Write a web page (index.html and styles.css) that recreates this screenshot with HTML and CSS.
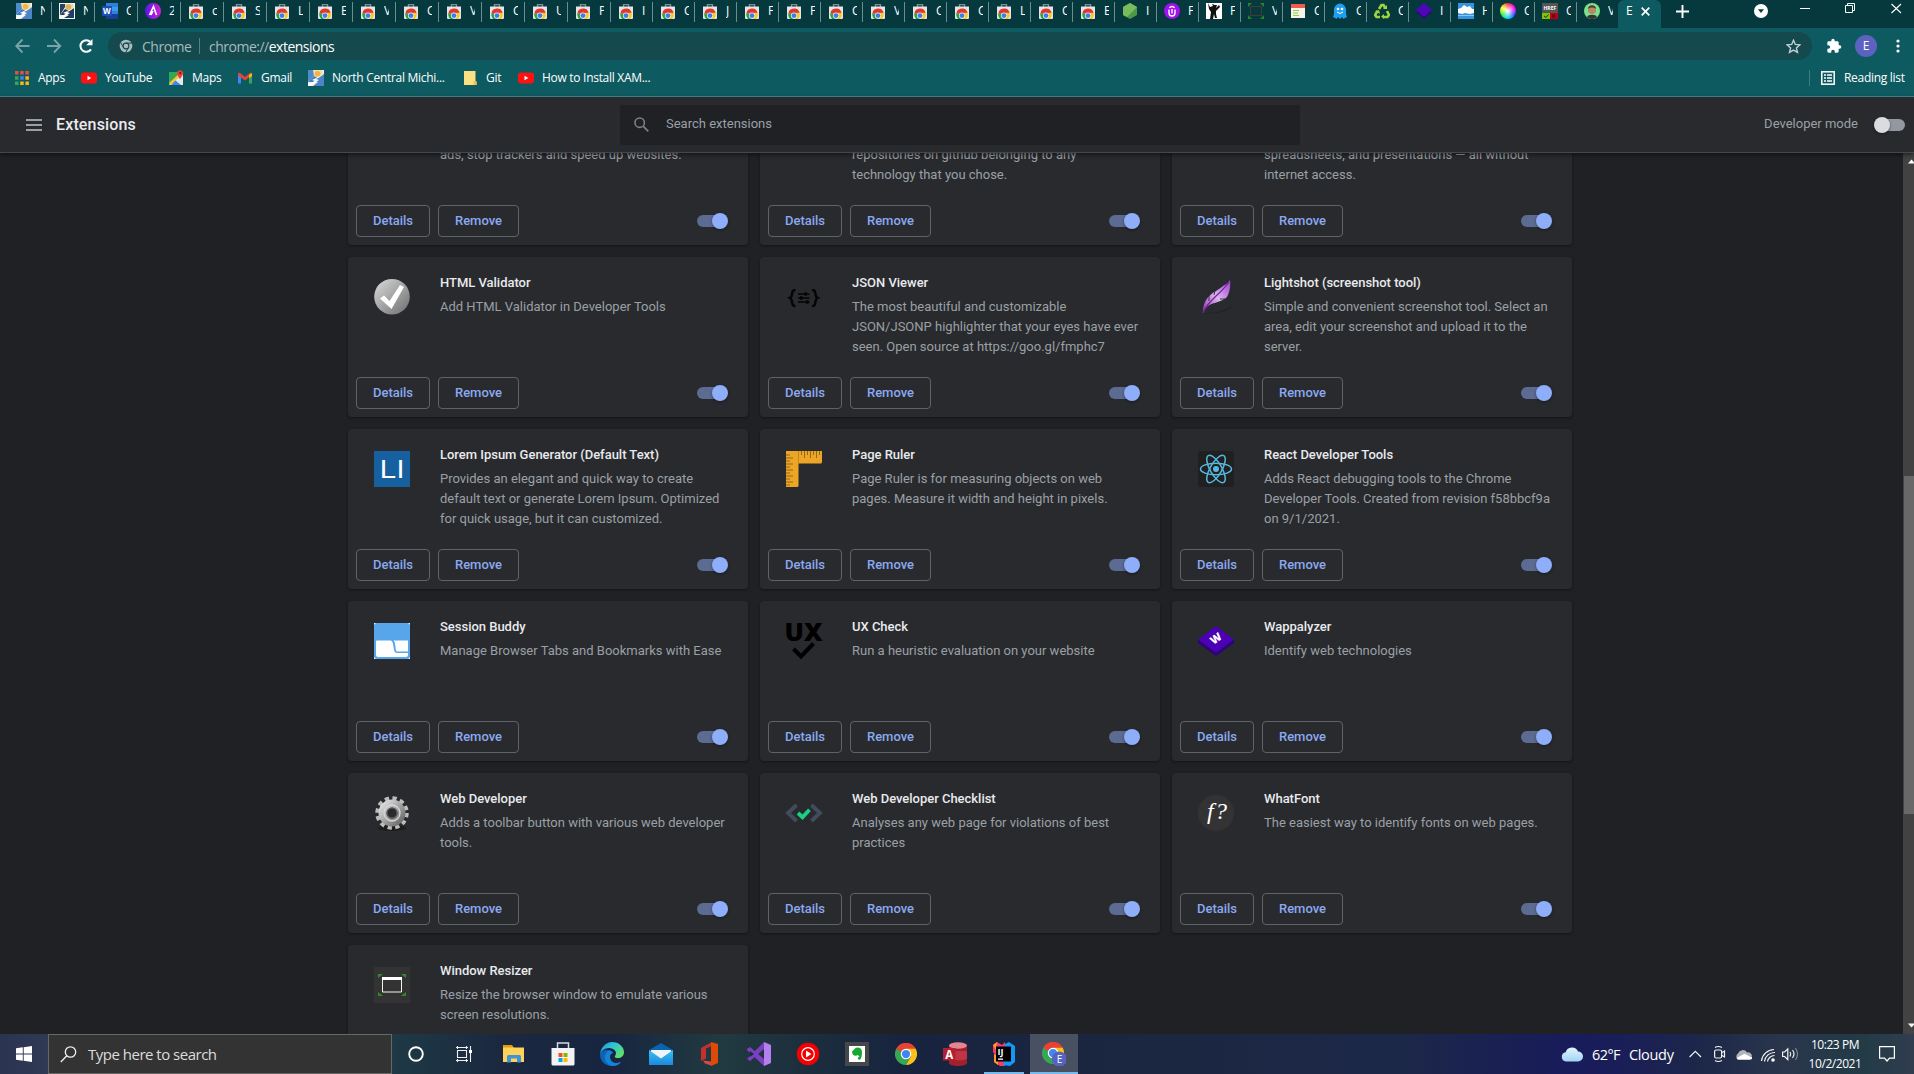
FILE: index.html
```html
<!DOCTYPE html>
<html lang="en">
<head>
<meta charset="utf-8">
<title>Extensions</title>
<link rel="stylesheet" href="styles.css">
</head>
<body>
<svg class="defs" width="0" height="0" aria-hidden="true">
  <defs>
    <linearGradient id="gSilver" x1="0" y1="0" x2="1" y2="1"><stop offset="0" stop-color="#dcdcdc"/><stop offset="1" stop-color="#6c6c6c"/></linearGradient>
    <linearGradient id="gFeather" x1="0" y1="1" x2="1" y2="0"><stop offset="0" stop-color="#8d2fb5"/><stop offset=".5" stop-color="#dcb4ee"/><stop offset="1" stop-color="#9b3fd0"/></linearGradient>
    <linearGradient id="gEdge" x1="0" y1="0" x2="1" y2=".6"><stop offset="0" stop-color="#1a8fe0"/><stop offset=".5" stop-color="#2fc3d8"/><stop offset="1" stop-color="#5fe06a"/></linearGradient>
    <linearGradient id="gPurple" x1="0" y1="0" x2="1" y2="0"><stop offset="0" stop-color="#5a15e8"/><stop offset="1" stop-color="#d41fd8"/></linearGradient>
    <linearGradient id="gCloud" x1="0" y1="0" x2="0" y2="1"><stop offset="0" stop-color="#e4f5ff"/><stop offset="1" stop-color="#9fd4f5"/></linearGradient>
    <linearGradient id="gMail" x1="0" y1="0" x2="0" y2="1"><stop offset="0" stop-color="#35c3f3"/><stop offset="1" stop-color="#1e88dd"/></linearGradient>
  </defs>
  <symbol id="store" viewBox="0 0 16 16">
    <path d="M5.500 4V1.600h5V4" fill="none" stroke="#7d9296" stroke-width="1.400"/>
    <path d="M1 3.500h14V15a1 1 0 0 1-1 1H2a1 1 0 0 1-1-1z" fill="#e4e6e6"/>
    <path d="M2.400 10.500A5.700 5.700 0 0 1 13.600 10L8 11z" fill="#e5352c"/>
    <path d="M2.400 10.200c-.4 2.200.2 4.200 1.800 5.800H8l-2-5z" fill="#26a341"/>
    <path d="M13.600 9.800c.5 2.600-.2 4.600-1.800 6.200H8l2.500-6.200z" fill="#fcc917"/>
    <circle cx="8" cy="12.600" r="3.100" fill="#e8eefc"/><circle cx="8" cy="12.600" r="2.400" fill="#3c7de8"/>
  </symbol>
  <symbol id="ncm" viewBox="0 0 16 16">
    <path d="M0 0h16v16H0z" fill="#f4f4ef"/><path d="M0 0h7v5L0 12z" fill="#4d8cc9"/>
    <path d="M5 0h9l1 4-5 4-4-2z" fill="#f6dfa4"/><circle cx="9.500" cy="3.800" r="2.800" fill="#f0b548"/>
    <path d="M16 4v12H5l5-4-4-1z" fill="#4a85c6"/><path d="M0 12l6-6 4 2-5 4z" fill="#3f7fc0"/><path d="M16 4l-8 5 3 1-9 6h-2v-1l7-4-3-1z" fill="#fff"/>
  </symbol>
  <symbol id="ncmdark" viewBox="0 0 16 16">
    <path d="M0 0h16v16H0z" fill="#f5f5ef"/><path d="M1 1h7L1 12z" fill="#2a4268"/>
    <path d="M6 1h8l1 3-5 4-4-2z" fill="#ecd9a6"/><circle cx="9.500" cy="4" r="2.800" fill="#d9b25a"/>
    <path d="M15 5v10H5l5-3-4-1z" fill="#213a63"/><path d="M1 12l5-6 4 2-5 4z" fill="#233c66"/><path d="M15 5L8 9l3 1-8 5H1l6-4-3-1z" fill="#fff"/>
  </symbol>
  <symbol id="yt" viewBox="0 0 16 16"><rect y="2.500" width="16" height="11" rx="3" fill="#f11"/><path d="M6.500 5.800v4.400L10.300 8z" fill="#fff"/></symbol>
  <symbol id="chrome" viewBox="0 0 24 24">
    <path d="M12 12L1.600 6A12 12 0 0 1 22.400 6z" fill="#e94235"/><path d="M1.600 6A12 12 0 0 0 12 24l5.200-9z" fill="#34a853"/><path d="M22.400 6H12l5.200 9L12 24A12 12 0 0 0 22.400 6z" fill="#fbc116"/>
    <path d="M1.600 6l5.200 9L12 12V6z" fill="#34a853"/><path d="M1.600 6A12 12 0 0 1 22.400 6H12a6 6 0 0 0-5.300 3.200L4.800 9z" fill="#e94235"/>
    <circle cx="12" cy="12" r="5.700" fill="#fff"/><circle cx="12" cy="12" r="4.500" fill="#4285f4"/>
  </symbol>
  <symbol id="resizer" viewBox="0 0 36 36">
    <path d="M4 11V7h5zM32 11V7h-5zM4 25v4h5zM32 25v4h-5z" fill="#2f8a2a"/>
    <path d="M8.500 11.500h19v13.500h-19z" fill="none" stroke="#f2f2f2"/><path d="M8 10h20v3H8z" fill="#fff"/>
  </symbol>
</svg>

<div class="browser">
  <div class="tabstrip">
    <div class="tab"><svg><use href="#ncm"/></svg><span>N</span></div>
    <div class="tab"><svg><use href="#ncmdark"/></svg><span>N</span></div>
    <div class="tab"><svg viewBox="0 0 16 16"><path d="M4 0h12v16H4z" fill="#2f7fdc"/><path d="M4 4h12v4H4z" fill="#3b9af0"/><path d="M4 11h12v5H4z" fill="#173f97"/><path d="M0 3h10v10H0z" fill="#1b4fb4"/><text x="1" y="11" class="glyph" font-size="8">W</text></svg><span>C</span></div>
    <div class="tab"><svg viewBox="0 0 16 16"><circle cx="8" cy="8" r="8" fill="url(#gPurple)"/><path d="M4.500 12L8.500 3.500l3 8.500M6 12l2-4" fill="none" stroke="#fff" stroke-width="1.600"/></svg><span>2</span></div>
    <div class="tab"><svg><use href="#store"/></svg><span>c</span></div>
    <div class="tab"><svg><use href="#store"/></svg><span>S</span></div>
    <div class="tab"><svg><use href="#store"/></svg><span>L</span></div>
    <div class="tab"><svg><use href="#store"/></svg><span>E</span></div>
    <div class="tab"><svg><use href="#store"/></svg><span>V</span></div>
    <div class="tab"><svg><use href="#store"/></svg><span>C</span></div>
    <div class="tab"><svg><use href="#store"/></svg><span>V</span></div>
    <div class="tab"><svg><use href="#store"/></svg><span>C</span></div>
    <div class="tab"><svg><use href="#store"/></svg><span>U</span></div>
    <div class="tab"><svg><use href="#store"/></svg><span>P</span></div>
    <div class="tab narrow"><svg><use href="#store"/></svg><span>I</span></div>
    <div class="tab narrow"><svg><use href="#store"/></svg><span>C</span></div>
    <div class="tab narrow"><svg><use href="#store"/></svg><span>J</span></div>
    <div class="tab narrow"><svg><use href="#store"/></svg><span>F</span></div>
    <div class="tab narrow"><svg><use href="#store"/></svg><span>F</span></div>
    <div class="tab narrow"><svg><use href="#store"/></svg><span>C</span></div>
    <div class="tab narrow"><svg><use href="#store"/></svg><span>V</span></div>
    <div class="tab narrow"><svg><use href="#store"/></svg><span>C</span></div>
    <div class="tab narrow"><svg><use href="#store"/></svg><span>C</span></div>
    <div class="tab narrow"><svg><use href="#store"/></svg><span>L</span></div>
    <div class="tab narrow"><svg><use href="#store"/></svg><span>C</span></div>
    <div class="tab narrow"><svg><use href="#store"/></svg><span>E</span></div>
    <div class="tab narrow"><svg viewBox="0 0 16 16"><path d="M8 0l7 4v8l-7 4-7-4V4z" fill="#4d9a45"/><path d="M8 0l7 4L5 14 1 12V4z" fill="#7abb5d"/></svg><span>I</span></div>
    <div class="tab narrow"><svg viewBox="0 0 16 16"><circle cx="8" cy="8" r="8" fill="#a010f0"/><path d="M5 6.500v3.500a3 3 0 0 0 6 0V6.500M5.500 4.800a3 3 0 0 1 5 0M8 6v4.500" fill="none" stroke="#fff" stroke-width="1.400"/></svg><span>F</span></div>
    <div class="tab narrow"><svg viewBox="0 0 16 16"><path d="M0 0h16v16H0z" fill="#fff"/><path d="M2 0l2 4 3-1-1-2 3 1 2 0-1 3 3-3 1 2-4 4v3l1 4H9l-1-4-1 5H4l1-7-2-3z" fill="#111"/></svg><span>F</span></div>
    <div class="tab narrow"><svg viewBox="0 0 16 16"><path d="M0 4V0h4zM16 4V0h-4zM0 12v4h4zM16 12v4h-4z" fill="#2c8429"/><rect x="2.500" y="3.500" width="11" height="9" fill="none" stroke="#433a3a"/></svg><span>V</span></div>
    <div class="tab narrow"><svg viewBox="0 0 16 16"><path d="M1 1h14v14H1z" fill="#f6f3e8"/><path d="M1 1h14v4H1z" fill="#ef5b4c"/><path d="M3 7.500h6M3 10h5M3 12.500h6" stroke="#8fce4a" stroke-width="1.200"/></svg><span>C</span></div>
    <div class="tab narrow"><svg viewBox="0 0 16 16"><path d="M1 14l1-3V7a6 6.500 0 0 1 12 0v4l1 3-2 1-1.500 1-1.500-2-2 2-2-2-1.500 2L3 15z" fill="#1e9ff2"/><circle cx="6" cy="6" r="1.300" fill="#fff"/><circle cx="10" cy="6" r="1.300" fill="#fff"/><path d="M5 9q3 3 6 0" fill="none" stroke="#fff"/></svg><span>C</span></div>
    <div class="tab narrow"><svg viewBox="0 0 16 16"><path d="M5 6l2.500-4h2l2 3.500M13 8l2 4-1.500 2H9M6 14H2.500L1 12l2.500-4" fill="none" stroke="#9fd43c" stroke-width="2.600"/><path d="M9 6h4V2zM10 11v5l-3-2.500zM1 8l4-1 1 4z" fill="#9fd43c"/></svg><span>C</span></div>
    <div class="tab narrow"><svg viewBox="0 0 16 16"><path d="M0 9l8 7 8-7-8-6z" fill="#2b0a7a"/><path d="M0 7l8 7 8-7-8-7z" fill="#4d06b8"/></svg><span>I</span></div>
    <div class="tab narrow"><svg viewBox="0 0 16 16"><path d="M0 0h16v16H0z" fill="#3b93e0"/><path d="M0 6l3-1 3-3 3 2 3-1 2 3h2v4l-4 1-5-1-3 1-4-1z" fill="#fff"/><path d="M0 12h16v1H0z" fill="#8cc5f0"/></svg><span>H</span></div>
    <div class="tab narrow"><div class="wheel"></div><span>C</span></div>
    <div class="tab narrow"><svg viewBox="0 0 16 16"><path d="M0 0h16v16H0z" fill="#555"/><path d="M0 10h8v6H0z" fill="#7ec400"/><path d="M8 10h8v6H8z" fill="#c00018"/><text x="1.500" y="7" class="glyph" font-size="5">HREF</text><path d="M2 13l2 1.500 2.500-3" fill="none" stroke="#234"/><path d="M10 11.500l3.500 3m0-3l-3.500 3" stroke="#400"/></svg><span>C</span></div>
    <div class="tab narrow last"><svg viewBox="0 0 16 16"><circle cx="8" cy="8" r="8" fill="#7de08a"/><path d="M3 14c1-3 9-3 10 0a8 8 0 0 1-10 0z" fill="#333"/><circle cx="8" cy="7" r="4" fill="#b98765"/><path d="M4 6c0-5 8-5 8 0-2-2-6-2-8 0z" fill="#4b3a30"/></svg><span>V</span></div>
    <div class="tab active"><span>E</span><svg class="x" viewBox="0 0 9 9"><path d="M.7.700l7.600 7.600m0-7.600L.7 8.300" stroke="#fff" stroke-width="1.700"/></svg></div>
    <svg class="plus" viewBox="0 0 13 13"><path d="M6.500 0v13M0 6.500h13" stroke="#fff" stroke-width="1.900"/></svg>
    <svg class="caps" viewBox="0 0 160 28"><circle cx="7" cy="11" r="7" fill="#fff"/><path d="M4 9.300h6L7 13z" fill="#06393d"/><path d="M46 8.500h10" stroke="#fff"/><path d="M91.500 5.500h7v7h-7zM93.500 5V3.500h7v7H99" fill="none" stroke="#fff"/><path d="M137.500 4l9.500 9m0-9l-9.500 9" stroke="#fff" stroke-width="1.100"/></svg>
  </div>

  <div class="toolbar">
    <svg class="nav" viewBox="0 0 90 28"><g fill="none" stroke="#7aa4a8" stroke-width="1.800"><path d="M14.500 14H1.500M7.500 7.500L1.200 14l6.300 6.500"/><path d="M32 14h13M39 7.500l6.300 6.500-6.300 6.500"/></g><path d="M76 17.300A5.800 5.800 0 1 1 75.500 10" fill="none" stroke="#fff" stroke-width="2"/><path d="M77.500 7v6.300h-6.300z" fill="#fff"/></svg>
    <div class="omnibox">
      <svg class="site" viewBox="0 0 14 14"><circle cx="7" cy="7" r="6.300" fill="#a9bdbf"/><circle cx="7" cy="7" r="2.900" fill="none" stroke="#14494e" stroke-width="1.100"/><path d="M7 4.100h6M4.500 8.500L1.600 3.400M9.500 8.500L6.700 13.500" stroke="#14494e"/></svg>
      <span class="scheme">Chrome</span><i></i><span class="url">chrome://<b>extensions</b></span>
      <svg class="star" viewBox="0 0 14 14"><path d="M7 1.200l1.700 3.900 4.200.4-3.200 2.800 1 4.200L7 10.300l-3.700 2.200 1-4.200L1.100 5.500l4.200-.4z" fill="none" stroke="#c4d2d3" stroke-width="1.300"/></svg>
    </div>
    <svg class="puzzle" viewBox="0 0 24 24"><path d="M20.500 11H19V7c0-1.100-.9-2-2-2h-4V3.500a2.500 2.500 0 0 0-5 0V5H4c-1.100 0-2 .9-2 2v3.800h1.500a2.700 2.700 0 0 1 0 5.400H2V20c0 1.100.9 2 2 2h3.800v-1.500a2.700 2.700 0 0 1 5.400 0V22H17c1.100 0 2-.9 2-2v-4h1.500a2.500 2.500 0 0 0 0-5z" fill="#fff"/></svg>
    <div class="avatar">E</div>
    <svg class="dots" viewBox="0 0 4 14"><circle cx="2" cy="2" r="1.600" fill="#fff"/><circle cx="2" cy="7" r="1.600" fill="#fff"/><circle cx="2" cy="12" r="1.600" fill="#fff"/></svg>
  </div>

  <div class="bookmarks">
    <div class="bm"><svg class="apps" viewBox="0 0 14 14"><path d="M0 0h3.500v3.500H0zM5.200 0h3.500v3.500H5.200zM10.400 0h3.500v3.500h-3.500z" fill="#ee4b40"/><path d="M0 5.200h3.500v3.500H0zM0 10.400h3.500v3.500H0z" fill="#35a853"/><path d="M5.200 5.200h3.500v3.500H5.200z" fill="#3f83f4"/><path d="M10.400 5.200h3.500v3.500h-3.500zM5.200 10.400h3.500v3.500H5.200zM10.400 10.400h3.500v3.500h-3.500z" fill="#fbb714"/></svg><span>Apps</span></div>
    <div class="bm"><svg><use href="#yt"/></svg><span>YouTube</span></div>
    <div class="bm"><svg viewBox="0 0 16 16"><path d="M1 2h14v13H1z" fill="#34a853"/><path d="M1 15L11 4h4v11z" fill="#e5e9ec"/><path d="M7 10l6 5H3z" fill="#4285f4"/><path d="M1 13L12 3l2 1L3 15z" fill="#fbc62d"/><path d="M12 9C9 5 9 4 9 3a3.200 3.200 0 0 1 6.300 0c0 1-.3 2-3.300 6z" fill="#ea4335"/><circle cx="12.200" cy="3" r="1.200" fill="#8a1a15"/></svg><span>Maps</span></div>
    <div class="bm"><svg viewBox="0 0 16 16"><path d="M1 4v9.500h3V7z" fill="#4285f4"/><path d="M15 4v9.500h-3V7z" fill="#34a853"/><path d="M1 3.500l1.500-1L8 7l5.500-4.500 1.500 1V5l-7 5.500L1 5z" fill="#ea4335"/><path d="M12 5l3-2v3l-3 2.200z" fill="#fbbc04"/></svg><span>Gmail</span></div>
    <div class="bm"><svg><use href="#ncm"/></svg><span>North Central Michi...</span></div>
    <div class="bm"><svg viewBox="0 0 16 16"><path d="M2 1h11.500v10l1 1v3H2z" fill="#fbe083"/><path d="M11.500 11h3v4h-3z" fill="#e9c358"/></svg><span>Git</span></div>
    <div class="bm"><svg><use href="#yt"/></svg><span>How to Install XAM...</span></div>
    <div class="reading"><svg viewBox="0 0 14 14"><rect x=".8" y=".8" width="12.400" height="12.400" fill="none" stroke="#fff" stroke-width="1.500"/><path d="M3 4h2m1 0h5M3 7h2m1 0h5M3 10h2m1 0h5" stroke="#fff" stroke-width="1.600"/></svg><span>Reading list</span></div>
  </div>
</div>

<header class="header">
  <svg class="menu" viewBox="0 0 16 12"><path d="M0 1h16M0 6h16M0 11h16" stroke="#9aa0a6" stroke-width="1.800"/></svg>
  <h1>Extensions</h1>
  <div class="search"><svg viewBox="0 0 15 15"><circle cx="5.700" cy="5.700" r="4.700" fill="none" stroke="#7c8084" stroke-width="1.600"/><path d="M9.300 9.300l5 5" stroke="#7c8084" stroke-width="1.800"/></svg>Search extensions</div>
  <div class="devmode"><span>Developer mode</span><div class="toggle off"></div></div>
</header>

<main class="page">
  <div class="grid">
    <article class="card cut"><div class="body"><div class="icon"></div><div class="info"><p>ads, stop trackers and speed up websites.</p></div></div><div class="actions"><button>Details</button><button>Remove</button><div class="toggle"></div></div></article>
    <article class="card cut"><div class="body"><div class="icon"></div><div class="info"><p>repositories on github belonging to any<br>technology that you chose.</p></div></div><div class="actions"><button>Details</button><button>Remove</button><div class="toggle"></div></div></article>
    <article class="card cut"><div class="body"><div class="icon"></div><div class="info"><p>spreadsheets, and presentations — all without<br>internet access.</p></div></div><div class="actions"><button>Details</button><button>Remove</button><div class="toggle"></div></div></article>

    <article class="card"><div class="body"><svg class="icon" viewBox="0 0 36 36"><circle cx="18" cy="17.700" r="17.800" fill="url(#gSilver)"/><path d="M6 19.500l4-3 5.500 5.500L26 6l4 2-12.500 22z" fill="#fff"/></svg><div class="info"><h2>HTML Validator</h2><p>Add HTML Validator in Developer Tools</p></div></div><div class="actions"><button>Details</button><button>Remove</button><div class="toggle"></div></div></article>
    <article class="card"><div class="body"><svg class="icon" viewBox="0 0 36 36"><g fill="none" stroke="#050505" stroke-width="2.500"><path d="M9.500 11.300c-5-1-2 6-5.500 7.500 3.500 1.500.5 9 5.500 8M26 11.300c5-1 2 6 5.500 7.500-3.500 1.500-.5 9-5.500 8"/><path d="M12 15h11.500M12 19h11.500M12 23h11.500" stroke-width="1.500"/><path d="M18.500 15h2.500M14 19h2.500M20 23h2.500" stroke-width="3.400"/></g></svg><div class="info"><h2>JSON Viewer</h2><p>The most beautiful and customizable<br>JSON/JSONP highlighter that your eyes have ever<br>seen. Open source at https://goo.gl/fmphc7</p></div></div><div class="actions"><button>Details</button><button>Remove</button><div class="toggle"></div></div></article>
    <article class="card"><div class="body"><svg class="icon" viewBox="0 0 36 36"><path d="M6 34c10 0 22-2 28-8-4 8-18 9-28 8z" fill="#222125"/><path d="M5 34C5 16 17 14 25 7c3-2 5-3 7-6 1 7-1 15-4 18-6 5-15 4-20 10z" fill="url(#gFeather)"/><path d="M5 34C9 22 22 16 31 3" fill="none" stroke="#7a1fa0" stroke-width="1.300"/><path d="M17 11l-1 5M22 20l5 0M11 17l0 5" stroke="#292a2d" stroke-width=".9"/></svg><div class="info"><h2>Lightshot (screenshot tool)</h2><p>Simple and convenient screenshot tool. Select an<br>area, edit your screenshot and upload it to the<br>server.</p></div></div><div class="actions"><button>Details</button><button>Remove</button><div class="toggle"></div></div></article>

    <article class="card"><div class="body"><svg class="icon" viewBox="0 0 36 36"><path d="M0 0h36v36H0z" fill="#17609f"/><text x="5" y="27" class="li" textLength="26" lengthAdjust="spacingAndGlyphs">LI</text></svg><div class="info"><h2>Lorem Ipsum Generator (Default Text)</h2><p>Provides an elegant and quick way to create<br>default text or generate Lorem Ipsum. Optimized<br>for quick usage, but it can customized.</p></div></div><div class="actions"><button>Details</button><button>Remove</button><div class="toggle"></div></div></article>
    <article class="card"><div class="body"><svg class="icon" viewBox="0 0 36 36"><path d="M0 0h36v11a1.500 1.500 0 0 1-1.500 1.500H12.500v22A1.500 1.500 0 0 1 11 36H0z" fill="#eda526"/><path d="M12.500 0v12.500" stroke="#c98412"/><path d="M15.500 0v4M18.500 0v7M21.500 0v4M24.500 0v7M27.500 0v4M30.500 0v7M33.500 0v4M0 4h4M0 7h7M0 10h4M0 13h7M0 16h4M0 19h7M0 22h4M0 25h7M0 28h4M0 31h7M0 34h4" stroke="#8c6114" stroke-width=".9"/></svg><div class="info"><h2>Page Ruler</h2><p>Page Ruler is for measuring objects on web<br>pages. Measure it width and height in pixels.</p></div></div><div class="actions"><button>Details</button><button>Remove</button><div class="toggle"></div></div></article>
    <article class="card"><div class="body"><svg class="icon" viewBox="0 0 36 36"><rect width="36" height="36" rx="2.500" fill="#202020"/><circle cx="18" cy="18" r="3" fill="#56b9e0"/><g fill="none" stroke="#56b9e0" stroke-width="1.500"><ellipse cx="18" cy="18" rx="15.500" ry="5.800"/><ellipse cx="18" cy="18" rx="15.500" ry="5.800" transform="rotate(60 18 18)"/><ellipse cx="18" cy="18" rx="15.500" ry="5.800" transform="rotate(120 18 18)"/></g></svg><div class="info"><h2>React Developer Tools</h2><p>Adds React debugging tools to the Chrome<br>Developer Tools. Created from revision f58bbcf9a<br>on 9/1/2021.</p></div></div><div class="actions"><button>Details</button><button>Remove</button><div class="toggle"></div></div></article>

    <article class="card"><div class="body"><svg class="icon" viewBox="0 0 36 36"><path d="M0 0h36v36H0z" fill="#fff"/><rect width="36" height="36" rx="3" fill="#57a5ea"/><path d="M2 18.500a1 1 0 0 1 1-1h13c2.500 0 3 2.500 3.500 6 .4 3.500 1 6.500 3.500 6.500h11v2a2 2 0 0 1-2 2H4a2 2 0 0 1-2-2z" fill="#fff"/><path d="M19.500 17.500H34v11H23.500c-1.800 0-1.700-2.500-2.200-6-.3-2.200-.6-4-1.800-5z" fill="#fff"/></svg><div class="info"><h2>Session Buddy</h2><p>Manage Browser Tabs and Bookmarks with Ease</p></div></div><div class="actions"><button>Details</button><button>Remove</button><div class="toggle"></div></div></article>
    <article class="card"><div class="body"><svg class="icon" viewBox="0 0 36 36"><text x="-1.500" y="18" class="ux" textLength="38" lengthAdjust="spacingAndGlyphs">UX</text><path d="M7.500 26l7.500 7.300L27.500 20.500" fill="none" stroke="#000" stroke-width="4"/></svg><div class="info"><h2>UX Check</h2><p>Run a heuristic evaluation on your website</p></div></div><div class="actions"><button>Details</button><button>Remove</button><div class="toggle"></div></div></article>
    <article class="card"><div class="body"><svg class="icon" viewBox="0 0 36 36"><path d="M0 17v3l18 13 18-13v-3z" fill="#2b0573"/><path d="M18 3l18 13.500L18 30 0 16.500z" fill="#4b00b3"/><text class="wap" transform="translate(15.500 22) rotate(-36)">W</text></svg><div class="info"><h2>Wappalyzer</h2><p>Identify web technologies</p></div></div><div class="actions"><button>Details</button><button>Remove</button><div class="toggle"></div></div></article>

    <article class="card"><div class="body"><svg class="icon" viewBox="0 0 36 36"><ellipse cx="18" cy="33" rx="14" ry="3" fill="#1d1d1f"/><circle cx="18" cy="18" r="14.500" fill="none" stroke="#bdbdbd" stroke-width="4.500" stroke-dasharray="4.200 3.392"/><circle cx="18" cy="18" r="9.500" fill="none" stroke="url(#gSilver)" stroke-width="8"/><circle cx="18" cy="18" r="8" fill="none" stroke="#d8d8d8" stroke-width="1.300"/><circle cx="18" cy="18" r="5" fill="#292a2d" stroke="#666"/></svg><div class="info"><h2>Web Developer</h2><p>Adds a toolbar button with various web developer<br>tools.</p></div></div><div class="actions"><button>Details</button><button>Remove</button><div class="toggle"></div></div></article>
    <article class="card"><div class="body"><svg class="icon" viewBox="0 0 36 36"><path d="M10.500 10L2 18l8.500 8M25.500 10l8.500 8-8.500 8" fill="none" stroke="#454b5e" stroke-width="3.800"/><path d="M12 18l4.500 4.200 7-7.500" fill="none" stroke="#17cf86" stroke-width="3.800"/></svg><div class="info"><h2>Web Developer Checklist</h2><p>Analyses any web page for violations of best<br>practices</p></div></div><div class="actions"><button>Details</button><button>Remove</button><div class="toggle"></div></div></article>
    <article class="card"><div class="body"><svg class="icon" viewBox="0 0 36 36"><circle cx="18" cy="18" r="18" fill="#333"/><text x="9" y="23.500" class="wf" textLength="20">f?</text></svg><div class="info"><h2>WhatFont</h2><p>The easiest way to identify fonts on web pages.</p></div></div><div class="actions"><button>Details</button><button>Remove</button><div class="toggle"></div></div></article>

    <article class="card"><div class="body"><svg class="icon tile"><use href="#resizer"/></svg><div class="info"><h2>Window Resizer</h2><p>Resize the browser window to emulate various<br>screen resolutions.</p></div></div></article>
  </div>
  <div class="scroll"><svg viewBox="0 0 11 8"><path d="M5 6.500h7L8.500 2.500z" fill="#fff"/></svg><div class="thumb"></div><svg viewBox="0 0 11 8"><path d="M5 1.500h7L8.500 5.500z" fill="#fff"/></svg></div>
</main>

<footer class="taskbar">
  <div class="start"><svg viewBox="0 0 16 16"><path d="M0 2.300L6.800 1.300V7.600H0zM7.700 1.200L16 0v7.600H7.700zM0 8.400h6.800v6.300L0 13.700zM7.700 8.400H16V16l-8.300-1.200z" fill="#fff"/></svg></div>
  <div class="tsearch"><svg viewBox="0 0 17 17"><circle cx="10.500" cy="6" r="5.200" fill="none" stroke="#f0f0f0" stroke-width="1.300"/><path d="M6.800 9.700L.8 16" stroke="#f0f0f0" stroke-width="1.300"/></svg>Type here to search</div>
  <div class="app"><svg viewBox="0 0 24 24"><circle cx="12" cy="12" r="6.800" fill="none" stroke="#fff" stroke-width="1.900"/></svg></div>
  <div class="app"><svg viewBox="0 0 24 24"><path d="M4.500 8.500h9v7h-9zM3 5.500h12M3 18.500h12M4.500 4v3M13.500 4v3M4.500 17v3M13.500 17v3M17.500 4v16" fill="none" stroke="#eee" stroke-width="1.100"/><path d="M16 8h3v3h-3z" fill="#fff"/></svg></div>
  <div class="app"><svg viewBox="0 0 24 24"><path d="M1 3h9l2 3H1z" fill="#e0a00a"/><path d="M1 5.500h21V20H1z" fill="#ffd35a"/><path d="M5 20.500v-6q0-1.500 1.500-1.500h11q1.500 0 1.500 1.500v6h-4v-4H9v4z" fill="#3f93d6"/></svg></div>
  <div class="app"><svg viewBox="0 0 24 24"><path d="M6.500 7V1h11v6" fill="none" stroke="#d8dadc" stroke-width="1.500"/><path d="M.5 6h23v16a1.500 1.500 0 0 1-1.500 1.500H2A1.500 1.500 0 0 1 .5 22z" fill="#f3f3f3"/><path d="M7.500 11h4v4h-4z" fill="#f25022"/><path d="M12.500 11h4v4h-4z" fill="#7fba00"/><path d="M7.500 16h4v4h-4z" fill="#00a4ef"/><path d="M12.500 16h4v4h-4z" fill="#ffb900"/></svg></div>
  <div class="app"><svg viewBox="0 0 24 24"><path d="M0 12a12 12 0 0 0 21 8c-7 3-11-1-11-5 0-3 2-4 3-4-2-4-11-4-13 1z" fill="#0c63b8"/><path d="M0 12C1 5 6 0 12 0c7 0 12 5 12 10 0 4-3 6-6 6-2 0-4-.5-3-2 3-4-1-8-6-8-4 0-8 3-9 6z" fill="url(#gEdge)"/><path d="M8 9c-6 5-3 13 4 15 3 0 7-1 9-4-7 3-11-1-11-5 0-3 2-4 3-4-1-2-3-3-5-2z" fill="#1781d6"/></svg></div>
  <div class="app"><svg viewBox="0 0 24 24"><path d="M0 8l12-7 12 7v3H0z" fill="#0a63b0"/><path d="M2 8h20v10H2z" fill="#f1f4f7"/><path d="M0 8l12 8.500L24 8v15H0z" fill="url(#gMail)"/></svg></div>
  <div class="app"><svg viewBox="0 0 24 24"><path d="M3 6L13 .500V4.500L8 6.500v10L3 19z" fill="#c4302a"/><path d="M5 18.500l8 1v4L7 21.500z" fill="#d8474a"/><path d="M13 0l7 2v19l-7 3z" fill="#e04a08"/></svg></div>
  <div class="app"><svg viewBox="0 0 24 24"><path d="M17 0l7 3v18l-7 3z" fill="#b57ff0"/><path d="M17 0v7L3 19l-3-2V7l3-2 14 12v7L0 8v9L17 0z" fill="#7b3fc4"/><path d="M3 9v6l4-3z" fill="#1b2b3c"/></svg></div>
  <div class="app"><svg viewBox="0 0 24 24"><circle cx="12" cy="12" r="11.200" fill="#f40000"/><circle cx="12" cy="12" r="6.300" fill="none" stroke="#fff" stroke-width="1.200"/><path d="M10 8.500v7l5.500-3.500z" fill="#fff"/></svg></div>
  <div class="app"><svg viewBox="0 0 24 24"><path d="M0 0h24v24H0z" fill="#45474a"/><path d="M4 4h16v16H4z" fill="#fff"/><path d="M7 9.500L10 6.500c2-2 7-1 7 3.500 0 6-1.500 8.500-3.500 7.500-1.500-1-.5-3 1-2.500l-1.500-2c-3 1.500-6 .5-6-3.500z" fill="#17a92f"/></svg></div>
  <div class="app"><svg viewBox="0 0 24 24"><use href="#chrome" x="1" y="1" width="22" height="22"/></svg></div>
  <div class="app"><svg viewBox="0 0 24 24"><path d="M6 3v18c0 4 18 4 18 0V3z" fill="#a21f2c"/><path d="M6 9h18v7c0 2-8 3-12 2z" fill="#c03545"/><ellipse cx="15" cy="3.500" rx="9" ry="3.300" fill="#e58592"/><path d="M0 6h12.500v12.500H0z" fill="#b3202f"/><text x="2.300" y="16.500" class="glyph" font-size="11.500">A</text></svg></div>
  <div class="app running"><svg viewBox="0 0 24 24"><path d="M1 3l4-3 5 3 3-3v24H8l-6-4 2-6-3-4z" fill="#f83c64"/><path d="M2 12l4 2v9l-4-3zM1 3l4-3-1 8z" fill="#fd9a28"/><path d="M13 2l4-2 6 4v16l-5 4-7-1z" fill="#1597f3"/><path d="M4 4.500h15v15H4z" fill="#000"/><text x="5.500" y="12.500" class="glyph" font-size="9">IJ</text><path d="M6 16.500h5v1.300H6z" fill="#fff"/></svg></div>
  <div class="app current"><svg viewBox="0 0 24 24"><use href="#chrome" x="0" y="0" width="22" height="22"/><circle cx="17.300" cy="17" r="7.600" fill="#5763c0"/><text x="14.700" y="20.700" class="glyph thin" font-size="10">E</text></svg></div>
  <div class="tray">
    <svg class="cloud" viewBox="0 0 22 16"><path d="M5 15.500a4.700 4.700 0 0 1-.3-9.300A6.500 6.500 0 0 1 17 5.500a5 5 0 0 1 0 10z" fill="url(#gCloud)"/></svg>
    <div class="weather"><span>62°F</span><span>Cloudy</span></div>
    <svg class="sys" viewBox="0 0 110 20"><g fill="none" stroke="#f2f2f2" stroke-width="1.200"><path d="M.6 13l5.700-5.700L12 13"/><rect x="25.600" y="6" width="7" height="8" rx="1.500"/><path d="M33 8.500l2.500-1.500v6L33 11.500M26 3.500q3-2 7 0M26 16.500q3 2 7 0"/><path d="M72.500 17A13 13 0 0 1 85 5.500M75.500 17.500A10 10 0 0 1 86 8.500M78.500 17.500a7 7 0 0 1 7-6"/><path d="M93.600 8h2l3.200-3v10.500l-3.200-3h-2zM101 8q1.500 2 0 4.500M103.500 6q3 4 0 8"/><path d="M106.500 4q4 6 0 12" stroke="#7d8594"/></g><circle cx="84" cy="16" r="1.800" fill="#fff"/><path d="M49 15.500a3.500 3.500 0 0 1 0-6 5 5 0 0 1 9-1 4 4 0 0 1 5 4l-7-1z" fill="#aeb3be"/><path d="M47.500 14l8-4.300 5 2.500c3-.5 4 3.300 0 3.500H49z" fill="#fff"/></svg>
    <div class="clock"><span>10:23 PM</span><span>10/2/2021</span></div>
    <svg class="note" viewBox="0 0 16 16"><path d="M.6.600h14.800v11.500h-4.900L8 15l-2.500-2.900H.6z" fill="none" stroke="#fff" stroke-width="1.200"/></svg>
  </div>
</footer>
</body>
</html>
```
FILE: styles.css
```css
* { box-sizing: border-box; }

body {
  margin: 0;
  width: 1914px;
  height: 1074px;
  overflow: hidden;
  display: flex;
  flex-direction: column;
  background: #202124;
  font-family: Roboto, "Liberation Sans", sans-serif;
  font-size: 13px;
}

svg { display: block; flex: none; }
.defs { position: absolute; }
.glyph { fill: #fff; font-family: "Open Sans", sans-serif; font-weight: 700; }
.glyph.thin { font-weight: 400; }

/* browser chrome */
.browser {
  height: 97px;
  flex: none;
  background: #0e5a61;
  border-bottom: 1px solid #43868a;
  font-family: "Open Sans", "Noto Sans", sans-serif;
  font-size: 12px;
  color: #fff;
}

.tabstrip {
  height: 28px;
  display: flex;
  background: #06393d;
  padding-left: 8px;
}

.tab {
  position: relative;
  width: 43px;
  height: 28px;
  flex: none;
  display: flex;
  padding: 3px 0 0 8px;
}
.tab.narrow { width: 42px; }
.tab svg, .wheel { width: 16px; height: 16px; flex: none; }
.tab span {
  width: 5px;
  margin-left: 8px;
  line-height: 16px;
  overflow: hidden;
}
.tab::after {
  content: "";
  position: absolute;
  right: -1px;
  top: 2px;
  width: 1px;
  height: 20px;
  background: #6c8c8e;
}
.tab.last::after, .tab.active::after { display: none; }
.tab.active {
  width: 43px;
  background: #0e5a61;
  border-radius: 6px 6px 0 0;
}
.tab.active span { width: 8px; margin-left: 0; }
.tab.active .x { width: 9px; height: 9px; margin: 4px 0 0 7px; }
.wheel {
  border-radius: 50%;
  background: radial-gradient(#fff, transparent 65%), conic-gradient(#f33, #f0f, #44f, #0df, #3e3, #ff3, #f33);
}
.plus { width: 13px; height: 13px; margin: 5px 0 0 15px; }
.caps { width: 160px; height: 28px; margin-left: 65px; }

.toolbar { height: 36px; display: flex; align-items: center; padding-left: 15px; }
.nav { width: 90px; height: 28px; }
.omnibox {
  width: 1704px;
  height: 28px;
  margin-left: 3px;
  display: flex;
  align-items: center;
  padding: 0 11px 0 11px;
  border-radius: 14px;
  background: #14494e;
  font-size: 14px;
  letter-spacing: -.5px;
  color: #a6bbbd;
}
.omnibox i { width: 1px; height: 16px; margin: 0 9px 0 8px; background: #5b8083; }
.omnibox b { font-weight: 400; color: #fff; }
.site { width: 14px; height: 14px; margin-right: 9px; }
.scheme { width: 49px; }
.star { width: 15px; height: 15px; margin-left: auto; }
.puzzle { width: 16px; height: 16px; margin-left: 14px; }
.avatar {
  width: 22px;
  height: 22px;
  margin-left: 13px;
  border-radius: 50%;
  background: #5b62bf;
  text-align: center;
  line-height: 22px;
}
.dots { width: 4px; height: 14px; margin-left: 19px; }

.bookmarks {
  height: 28px;
  display: grid;
  grid-template-columns: 66px 87px 69px 71px 154px 56px 1292px auto;
  align-items: center;
  padding-left: 15px;
  letter-spacing: -.29px;
}
.bm, .reading { display: flex; align-items: center; gap: 8px; white-space: nowrap; }
.bm span, .reading span { padding-bottom: 1px; }
.bm svg { width: 16px; height: 16px; }
.bm .apps { width: 14px; height: 14px; margin-right: 1px; }
.reading { height: 16px; width: 105px; margin-left: -1px; padding-left: 11px; gap: 9px; border-left: 1px solid #3f7b80; }
.reading svg { width: 14px; height: 14px; }

/* page header */
.header {
  position: relative;
  z-index: 1;
  height: 56px;
  flex: none;
  display: flex;
  align-items: center;
  padding-left: 26px;
  background: #292a2d;
  border-bottom: 1px solid #46474a;
  box-shadow: 0 2px 4px rgba(0, 0, 0, .45);
}
.menu { width: 16px; height: 12px; }
h1 { width: 564px; margin: 0 0 0 14px; font-size: 16px; font-weight: 500; line-height: 20px; letter-spacing: .15px; color: #e8eaed; }
.search {
  width: 680px;
  height: 40px;
  display: flex;
  align-items: center;
  gap: 17px;
  padding: 0 0 2px 14px;
  border-radius: 2px;
  background: #202124;
  color: #9aa0a6;
}
.search svg { width: 15px; height: 15px; margin-top: 2px; }
.devmode { width: 605px; display: flex; justify-content: flex-end; align-items: center; gap: 16px; color: #9aa0a6; }
.devmode span { padding-bottom: 2px; }

.toggle { position: relative; width: 31px; height: 16px; flex: none; }
.toggle::before {
  content: "";
  position: absolute;
  inset: 2px 1px 2px 0;
  border-radius: 6px;
  background: #5b6b92;
}
.toggle::after {
  content: "";
  position: absolute;
  right: 0;
  top: 0;
  width: 16px;
  height: 16px;
  border-radius: 50%;
  background: #8eaefa;
  box-shadow: 0 1px 3px rgba(0, 0, 0, .4);
}
.toggle.off::before { inset: 2px 0 2px 1px; background: #9297a0; }
.toggle.off::after { right: auto; left: 0; background: #dadce0; }

/* extension cards */
.page { flex: 1; min-height: 0; display: flex; overflow: hidden; }
.grid {
  display: grid;
  grid-template-columns: repeat(3, 400px);
  grid-auto-rows: 160px;
  gap: 12px;
  margin: -68px 0 0 348px;
}
.card {
  display: flex;
  flex-direction: column;
  border-radius: 4px;
  background: #292a2d;
  box-shadow: 0 1px 3px rgba(0, 0, 0, .4);
}
.body { display: flex; height: 97px; padding: 16px 0 0 26px; overflow: hidden; }
.icon { width: 36px; height: 36px; margin: 6px 30px 0 0; flex: none; overflow: visible; }
.tile { background: #333; }
.info { white-space: nowrap; }
h2 { margin: 0 0 4px; font-size: 13px; font-weight: 500; line-height: 20px; letter-spacing: -.02px; color: #e8eaed; }
.info p { margin: 0; line-height: 20px; color: #9aa0a6; }
.cut .info { padding-top: 44px; }
.actions { display: flex; align-items: center; height: 32px; margin: 23px 20px 0 8px; gap: 8px; }
button {
  width: 74px;
  height: 32px;
  padding: 0 0 2px;
  border: 1px solid #5f6368;
  border-radius: 4px;
  background: none;
  color: #8aa9f2;
  font: 500 13px Roboto, sans-serif;
}
button + button { width: 81px; }
.actions .toggle { margin-left: auto; }

.li { font: 25px "Open Sans", sans-serif; fill: #fff; }
.ux { font: 800 25px "Open Sans", sans-serif; fill: #000; }
.wap { font: 800 11px "Open Sans", sans-serif; fill: #fff; }
.wf { font: italic 24px "Liberation Serif", serif; fill: #fff; }

.scroll {
  width: 11px;
  margin-left: auto;
  display: flex;
  flex-direction: column;
  padding: 4px 0;
  background: #424242;
}
.scroll svg { width: 11px; height: 8px; }
.thumb { height: 338px; margin: 311px 0 auto 1px; background: #686868; }

/* taskbar */
.taskbar {
  height: 40px;
  flex: none;
  display: flex;
  background: linear-gradient(90deg, #2a3350 0, #303a54 48px, #1e3a45 392px, #1b2840 500px, #182540 610px, #213a40 720px, #1c2f3d 800px, #18243f 900px, #1b2740 1150px, #1c2848 1400px, #181b5a 1570px, #1a1e58 1620px, #1c2749 1700px, #2a354c 1780px, #223b47 1860px, #303d4e 1914px);
  font-family: "Open Sans", "Noto Sans", sans-serif;
  color: #fff;
}
.start { width: 48px; display: grid; place-items: center; }
.start svg { width: 16px; height: 16px; }
.tsearch {
  width: 344px;
  display: flex;
  align-items: center;
  gap: 11px;
  padding-left: 11px;
  border: 1px solid #686868;
  background: #333;
  color: #dcdcdc;
  font-size: 15px;
  letter-spacing: -.5px;
}
.tsearch svg { width: 17px; height: 17px; }
.app { width: 49px; display: grid; place-items: center; padding-right: 1px; }
.app svg { width: 24px; height: 24px; }
.running { background: linear-gradient(#76b9ed, #76b9ed) 4px 100% / 40px 2px no-repeat; }
.current { width: 48px; margin-left: 1px; background: #495062; border-bottom: 2px solid #76b9ed; padding: 2px 0 0; }
.tray { display: flex; align-items: center; margin-left: auto; padding-right: 19px; white-space: nowrap; }
.cloud { width: 22px; height: 16px; }
.weather { display: flex; gap: 9px; width: 97px; margin: 0 0 0 9px; font-size: 14.5px; letter-spacing: -.6px; }
.weather span + span { letter-spacing: -.3px; }
.sys { width: 110px; height: 20px; }
.clock { width: 52px; margin: 0 18px 0 10px; display: flex; flex-direction: column; align-items: center; font-size: 12px; line-height: 19px; letter-spacing: -.45px; }
.note { width: 16px; height: 16px; }
```
